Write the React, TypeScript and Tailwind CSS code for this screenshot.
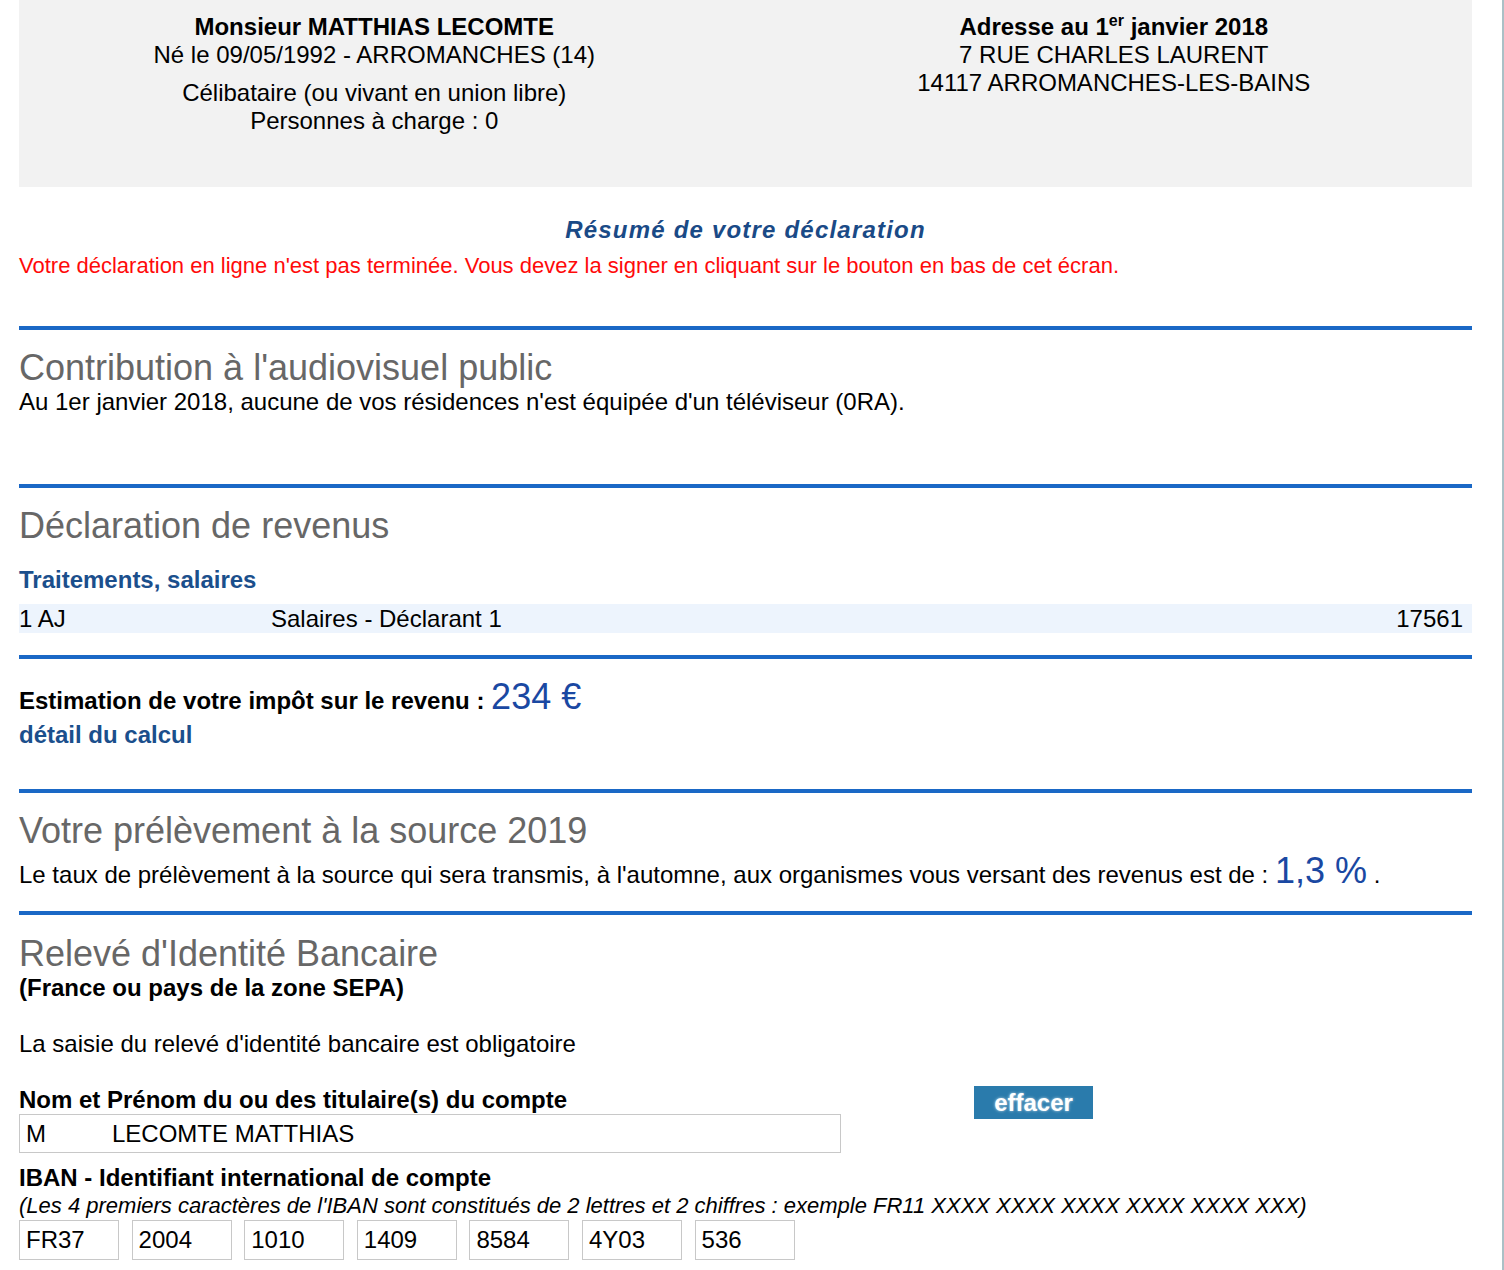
const BLUE_LINE = "h-[4px] bg-[#1a68c6]";

const iban = ["FR37", "2004", "1010", "1409", "8584", "4Y03", "536"];

function Rule({ className = "" }: { className?: string }) {
  return <div className={`${BLUE_LINE} ${className}`} />;
}

function SectionTitle({ children, className = "" }: { children: React.ReactNode; className?: string }) {
  return <h2 className={`text-[36px] leading-[40px] text-[#676767] ${className}`}>{children}</h2>;
}

export default function App() {
  return (
    <div className="w-[1504px] min-h-[1270px] bg-white border-r-[2px] border-[#abc0c6] font-['Liberation_Sans',Arial,Helvetica,sans-serif] text-[24px] leading-[28px] text-black">
      <div className="pl-[19px] pr-[30px]">
        {/* En-tête contribuable */}
        <div className="h-[187px] bg-[#f2f2f2] grid grid-cols-2 pt-[13px] text-center">
          <div className="pr-[16px]">
            <p className="font-bold">Monsieur MATTHIAS LECOMTE</p>
            <p>Né le 09/05/1992 - ARROMANCHES (14)</p>
            <p className="mt-[10px]">Célibataire (ou vivant en union libre)</p>
            <p>Personnes à charge : 0</p>
          </div>
          <div className="pl-[10px]">
            <p className="font-bold">
              Adresse au 1<sup className="text-[16px] leading-none relative -top-[9px]">er</sup> janvier 2018
            </p>
            <p>7 RUE CHARLES LAURENT</p>
            <p>14117 ARROMANCHES-LES-BAINS</p>
          </div>
        </div>

        <p className="mt-[29px] text-center font-bold italic tracking-[1.2px] text-[#1a4a86]">
          Résumé de votre déclaration
        </p>
        <p className="mt-[8px] text-[22px] text-[#ff0a0a]">
          Votre déclaration en ligne n'est pas terminée. Vous devez la signer en cliquant sur le bouton en bas de cet écran.
        </p>

        {/* Contribution audiovisuel */}
        <Rule className="mt-[46px]" />
        <SectionTitle className="mt-[18px]">Contribution à l'audiovisuel public</SectionTitle>
        <p>Au 1er janvier 2018, aucune de vos résidences n'est équipée d'un téléviseur (0RA).</p>

        {/* Revenus */}
        <Rule className="mt-[68px]" />
        <SectionTitle className="mt-[18px]">Déclaration de revenus</SectionTitle>
        <p className="mt-[20px] font-bold text-[#1b4f8c]">Traitements, salaires</p>
        <div className="mt-[10px] h-[29px] bg-[#edf4fd] flex items-center pr-[9px]">
          <span className="w-[252px]">1 AJ</span>
          <span className="flex-1">Salaires - Déclarant 1</span>
          <span>17561</span>
        </div>

        <Rule className="mt-[22px]" />
        <p className="mt-[18px] leading-[40px] font-bold">
          Estimation de votre impôt sur le revenu :{" "}
          <span className="font-normal text-[36px] text-[#1a48a2]">234 €</span>
        </p>
        <p className="font-bold text-[#1b4f8c]">détail du calcul</p>

        {/* Prélèvement à la source */}
        <Rule className="mt-[40px]" />
        <SectionTitle className="mt-[18px]">Votre prélèvement à la source 2019</SectionTitle>
        <p className="leading-[40px]">
          Le taux de prélèvement à la source qui sera transmis, à l'automne, aux organismes vous versant des revenus est de :{" "}
          <span className="text-[36px] text-[#1a48a2]">1,3 %</span> .
        </p>

        {/* RIB */}
        <Rule className="mt-[16px]" />
        <SectionTitle className="mt-[19px]">Relevé d'Identité Bancaire</SectionTitle>
        <p className="font-bold">(France ou pays de la zone SEPA)</p>
        <p className="mt-[28px]">La saisie du relevé d'identité bancaire est obligatoire</p>

        <div className="mt-[28px] flex">
          <div className="w-[822px]">
            <p className="font-bold">Nom et Prénom du ou des titulaire(s) du compte</p>
            <div className="h-[39px] border border-[#c8c8c8] flex items-center pl-[6px]">
              <span className="w-[86px]">M</span>
              <span>LECOMTE MATTHIAS</span>
            </div>
          </div>
          <button className="ml-[133px] w-[119px] h-[33px] bg-[#2a7bac] text-white font-bold text-[24px] leading-[33px] [text-shadow:0_0_3px_rgba(255,255,255,0.7)]">
            effacer
          </button>
        </div>

        <p className="mt-[11px] font-bold">IBAN - Identifiant international de compte</p>
        <p className="italic text-[22px] leading-[28px]">
          (Les 4 premiers caractères de l'IBAN sont constitués de 2 lettres et 2 chiffres : exemple FR11 XXXX XXXX XXXX XXXX XXXX XXX)
        </p>
        <div className="flex gap-[12.6px]">
          {iban.map((part) => (
            <div key={part} className="w-[100px] h-[40px] border border-[#c8c8c8] flex items-center pl-[6px]">
              {part}
            </div>
          ))}
        </div>
      </div>
    </div>
  );
}
